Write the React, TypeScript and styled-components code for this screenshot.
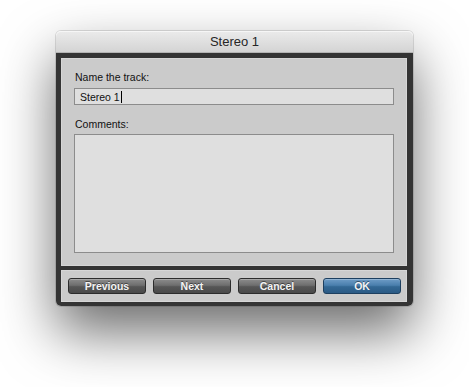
import React from "react";
import styled, { createGlobalStyle } from "styled-components";

const Global = createGlobalStyle`
  html, body { margin: 0; padding: 0; background: #ffffff; }
  body { font-family: "Liberation Sans", Arial, Helvetica, sans-serif; }
`;

const Page = styled.div`
  width: 469px;
  height: 387px;
  display: flex;
  justify-content: center;
  align-items: flex-start;
  padding-top: 31px;
  box-sizing: border-box;
  overflow: hidden;
`;

const Window = styled.div`
  width: 357px;
  display: flex;
  flex-direction: column;
  border-radius: 5px;
  box-shadow: 0 26px 55px rgba(0, 0, 0, 0.58), 0 0 0 1px rgba(0, 0, 0, 0.12);
`;

const TitleBar = styled.div`
  height: 22px;
  border-radius: 5px 5px 0 0;
  background: linear-gradient(#ebebeb, #d4d4d4);
  border-bottom: 1px solid #b4b4b4;
  box-shadow: inset 0 1px 0 #f6f6f6;
  display: flex;
  align-items: center;
  justify-content: center;
  font-size: 13px;
  color: #262626;
  box-sizing: border-box;
`;

const Frame = styled.div`
  background: #343434;
  padding: 5px 6px 4px 5px;
  border-radius: 0 0 5px 5px;
  display: flex;
  flex-direction: column;
  gap: 4px;
`;

const Panel = styled.div`
  background: #cbcbcb;
  box-shadow: inset 0 0 0 1px #d6d6d6;
`;

const Content = styled(Panel)`
  height: 208px;
  box-sizing: border-box;
  padding: 13px 13px 13px 13px;
  display: flex;
  flex-direction: column;
`;

const Label = styled.div<{ $gap?: number }>`
  font-size: 10.5px;
  color: #111;
  line-height: 13px;
  margin-left: 1px;
  margin-bottom: ${(p) => p.$gap ?? 3}px;
`;

const Field = styled.div`
  height: 17px;
  box-sizing: border-box;
  background: #dfdfdf;
  border: 1px solid #8c8c8c;
  font-size: 10.5px;
  color: #111;
  display: flex;
  align-items: center;
  padding-left: 5px;
  margin-bottom: 13px;
`;

const Caret = styled.span`
  display: inline-block;
  width: 1px;
  height: 12px;
  background: #000;
  margin-left: 1px;
`;

const Area = styled.div`
  flex: 1;
  background: #dfdfdf;
  border: 1px solid #8c8c8c;
`;

const Footer = styled(Panel)`
  height: 32px;
  box-sizing: border-box;
  padding: 8px 6px 8px 7px;
  display: flex;
  justify-content: space-between;
`;

const Button = styled.div<{ $primary?: boolean }>`
  width: 78px;
  height: 16px;
  box-sizing: border-box;
  border-radius: 3px;
  border: 1px solid ${(p) => (p.$primary ? "#1d3f5f" : "#2c2c2c")};
  background: ${(p) =>
    p.$primary
      ? "linear-gradient(#6e9cc6, #4a7fad 45%, #336894 55%, #2b5a84)"
      : "linear-gradient(#8c8c8c, #6e6e6e 45%, #565656 55%, #4a4a4a)"};
  box-shadow: inset 0 1px 0 rgba(255, 255, 255, 0.25);
  display: flex;
  align-items: center;
  justify-content: center;
  font-size: 10.5px;
  font-weight: bold;
  color: #f4f4f4;
  text-shadow: 0 -1px 0 rgba(0, 0, 0, 0.45);
`;

export default function App() {
  return (
    <>
      <Global />
      <Page>
        <Window>
          <TitleBar>Stereo 1</TitleBar>
          <Frame>
            <Content>
              <Label $gap={4}>Name the track:</Label>
              <Field>
                Stereo 1<Caret />
              </Field>
              <Label>Comments:</Label>
              <Area />
            </Content>
            <Footer>
              <Button>Previous</Button>
              <Button>Next</Button>
              <Button>Cancel</Button>
              <Button $primary>OK</Button>
            </Footer>
          </Frame>
        </Window>
      </Page>
    </>
  );
}
